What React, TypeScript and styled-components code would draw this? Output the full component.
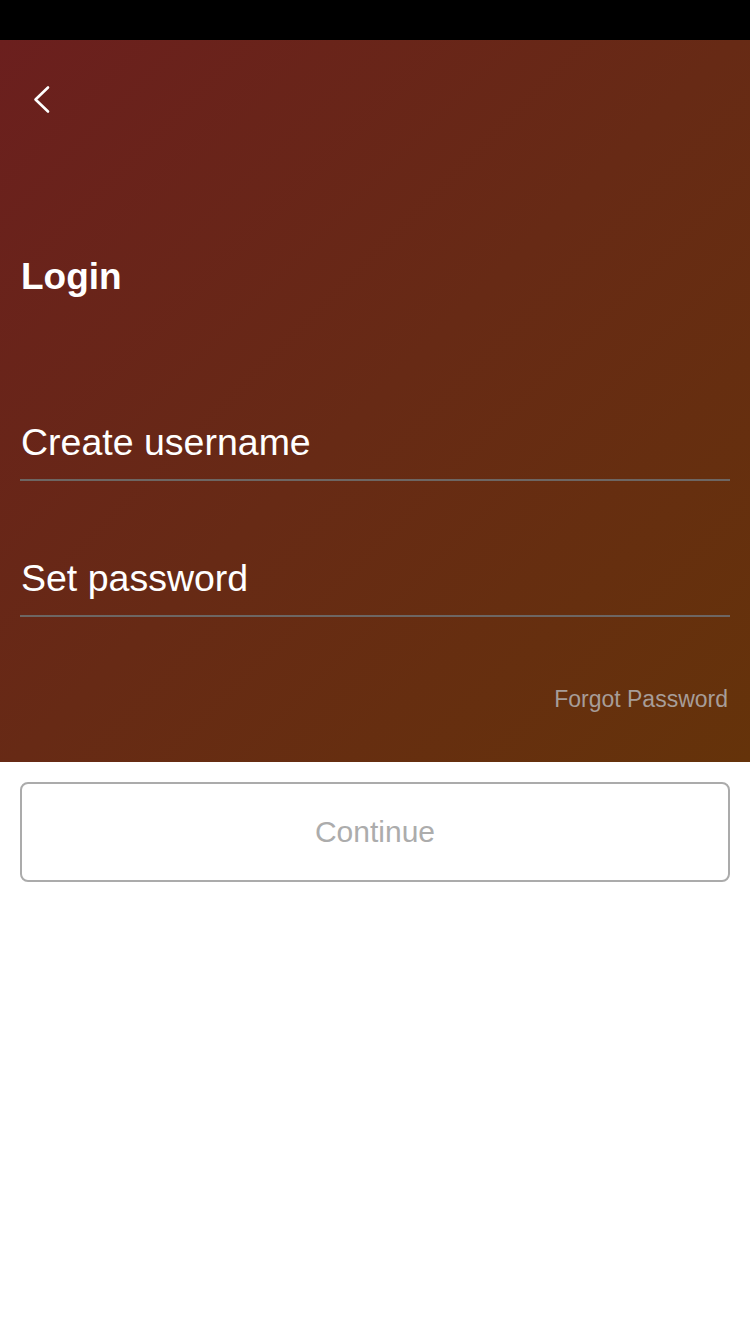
import styled, { createGlobalStyle } from "styled-components";

const GlobalStyle = createGlobalStyle`
  html, body {
    margin: 0;
    padding: 0;
    background: #ffffff;
    font-family: "Liberation Sans", Arial, sans-serif;
  }
`;

const Screen = styled.div`
  width: 750px;
  min-height: 1334px;
  display: flex;
  flex-direction: column;
  background: #ffffff;
`;

const StatusBar = styled.div`
  height: 40px;
  background: #000000;
`;

const Hero = styled.div`
  height: 722px;
  box-sizing: border-box;
  padding: 0 20px;
  display: flex;
  flex-direction: column;
  background: linear-gradient(135deg, #6b1f1e 0%, #672a15 50%, #65330a 100%);
`;

const BackButton = styled.button`
  margin: 44px 0 0 12px;
  width: 30px;
  height: 30px;
  padding: 0;
  border: none;
  background: none;
  display: flex;
  align-items: center;
  justify-content: flex-start;
  cursor: pointer;
`;

const Title = styled.h1`
  margin: 141px 0 0 1px;
  font-size: 37px;
  line-height: 44px;
  font-weight: 700;
  color: #ffffff;
`;

const Field = styled.label<{ $top: number }>`
  margin-top: ${(p) => p.$top}px;
  display: block;
  border-bottom: 2px solid #6d6663;
`;

const FieldInput = styled.input`
  width: 100%;
  box-sizing: border-box;
  border: none;
  outline: none;
  background: transparent;
  padding: 0 0 0 1px;
  height: 73px;
  font-family: "Liberation Sans", Arial, sans-serif;
  font-size: 37.5px;
  color: #ffffff;
  &::placeholder {
    color: #ffffff;
    opacity: 1;
  }
`;

const ForgotLink = styled.a`
  margin-top: 69px;
  align-self: flex-end;
  margin-right: 2px;
  font-size: 23px;
  color: #a79d98;
  text-decoration: none;
`;

const Footer = styled.div`
  padding: 20px 20px 0;
`;

const ContinueButton = styled.button`
  width: 100%;
  height: 100px;
  box-sizing: border-box;
  border: 2px solid #ababab;
  border-radius: 8px;
  background: #ffffff;
  font-family: "Liberation Sans", Arial, sans-serif;
  font-size: 30px;
  color: #acacac;
`;

function ChevronLeft() {
  return (
    <svg width="20" height="30" viewBox="0 0 20 30">
      <path
        d="M16 3.5 L3.5 15.5 L16 27.5"
        fill="none"
        stroke="#ffffff"
        strokeWidth="2.6"
        strokeLinecap="round"
        strokeLinejoin="round"
      />
    </svg>
  );
}

export default function App() {
  return (
    <>
      <GlobalStyle />
      <Screen>
        <StatusBar />
        <Hero>
          <BackButton aria-label="Back">
            <ChevronLeft />
          </BackButton>
          <Title>Login</Title>
          <Field $top={107}>
            <FieldInput placeholder="Create username" />
          </Field>
          <Field $top={61}>
            <FieldInput type="password" placeholder="Set password" />
          </Field>
          <ForgotLink href="#">Forgot Password</ForgotLink>
        </Hero>
        <Footer>
          <ContinueButton>Continue</ContinueButton>
        </Footer>
      </Screen>
    </>
  );
}
